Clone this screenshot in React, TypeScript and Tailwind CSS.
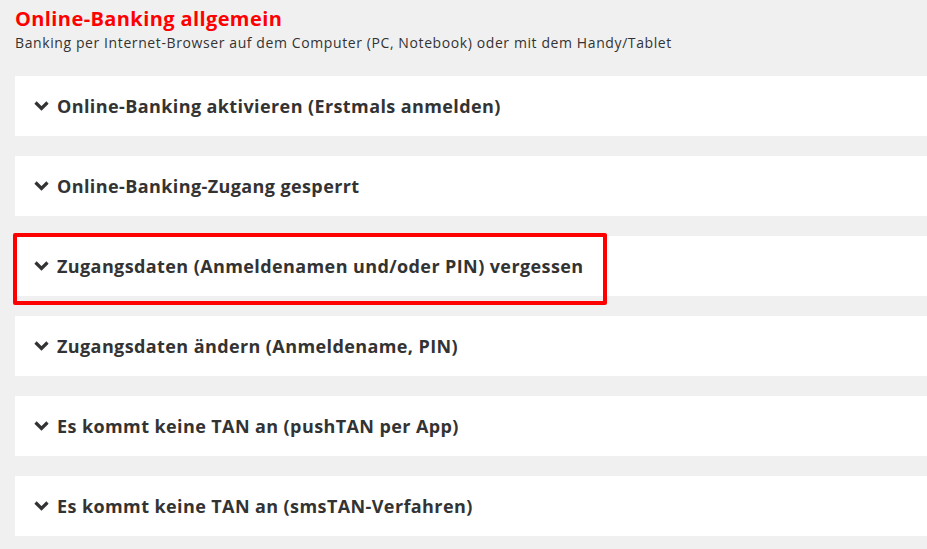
import React from 'react';

const items = [
  'Online-Banking aktivieren (Erstmals anmelden)',
  'Online-Banking-Zugang gesperrt',
  'Zugangsdaten (Anmeldenamen und/oder PIN) vergessen',
  'Zugangsdaten ändern (Anmeldename, PIN)',
  'Es kommt keine TAN an (pushTAN per App)',
  'Es kommt keine TAN an (smsTAN-Verfahren)',
];

const Chevron = () => (
  <svg width="15" height="10" viewBox="0 0 15 10" className="shrink-0">
    <path d="M1.5 1.5 L7.5 7.5 L13.5 1.5" fill="none" stroke="#333333" strokeWidth="3.2" />
  </svg>
);

export default function App() {
  return (
    <div
      className="min-h-screen bg-[#f0f0f0] pl-[15px] pt-[5px] overflow-hidden"
      style={{ fontFamily: '"Open Sans", "Noto Sans", sans-serif' }}
    >
      <h1 className="text-[20px] leading-[28px] font-bold tracking-[0.4px] text-[#ff0000]">Online-Banking allgemein</h1>
      <p className="text-[14px] leading-[20px] tracking-[0.6px] text-[#333333]">
        Banking per Internet-Browser auf dem Computer (PC, Notebook) oder mit dem Handy/Tablet
      </p>
      <div className="mt-[23px] flex flex-col gap-[20px]">
        {items.map((label, i) => (
          <div key={i} className="relative">
            <div className="h-[60px] bg-white flex items-center gap-[8px] pl-[19px]">
              <Chevron />
              <span className="text-[18px] font-bold tracking-[0.4px] text-[#333333] whitespace-nowrap">{label}</span>
            </div>
            {i === 2 && (
              <div className="absolute left-[-2px] top-[-3px] w-[594px] h-[72px] border-4 border-[#ff0000] rounded-[2px] pointer-events-none" />
            )}
          </div>
        ))}
      </div>
    </div>
  );
}
